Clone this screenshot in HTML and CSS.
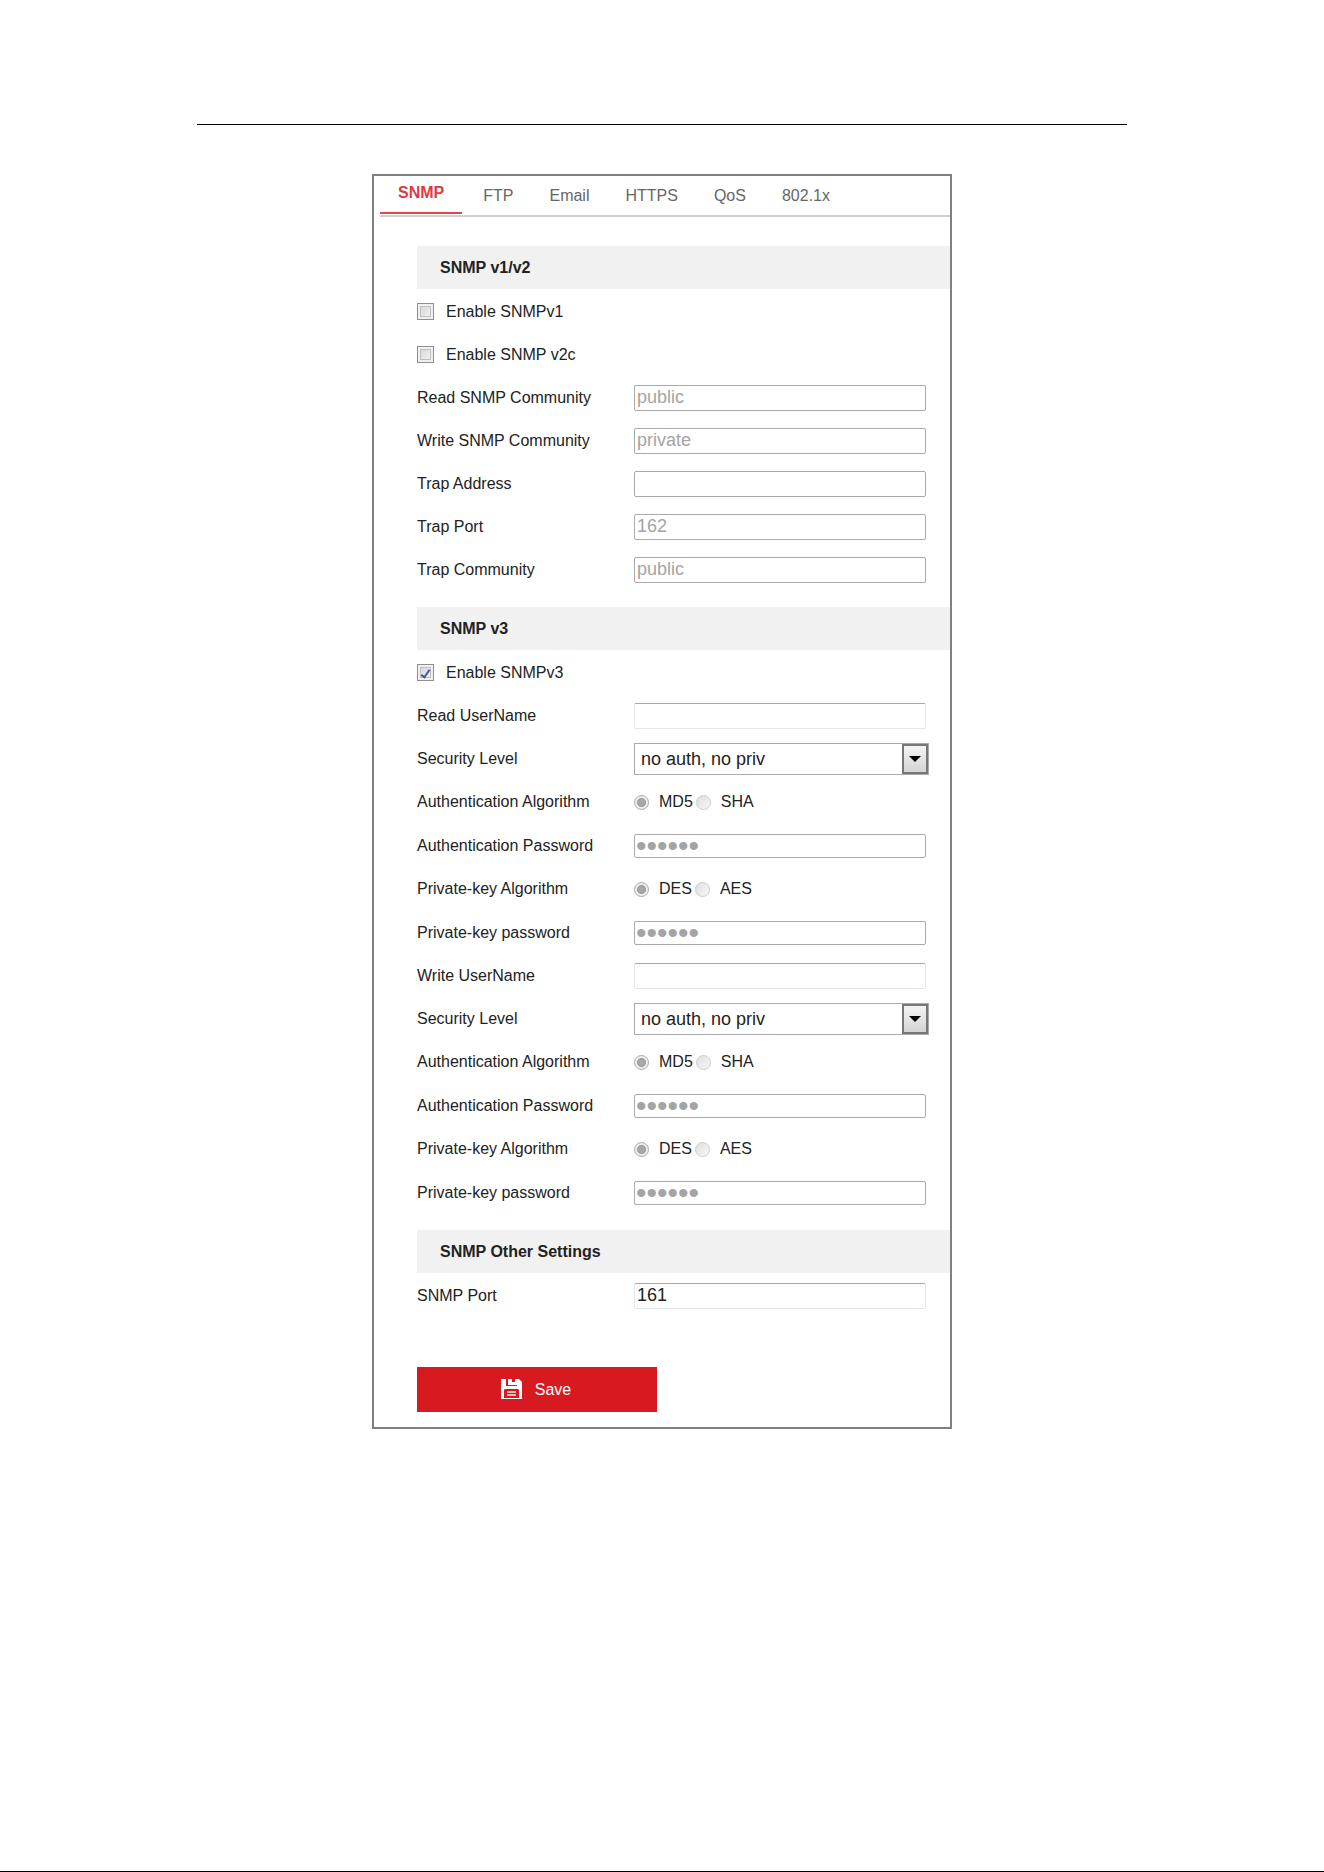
FILE: index.html
```html
<!DOCTYPE html>
<html lang="en">
<head>
    <meta charset="UTF-8">
    <meta name="viewport" content="width=device-width, initial-scale=1.0">
    <title>SNMP Settings</title>
    <link rel="stylesheet" href="styles.css">
</head>
<body>
    <hr class="page-rule">

    <div class="panel">
        <nav class="tabs">
            <a href="#snmp" class="active">SNMP</a>
            <a href="#ftp">FTP</a>
            <a href="#email">Email</a>
            <a href="#https">HTTPS</a>
            <a href="#qos">QoS</a>
            <a href="#8021x">802.1x</a>
        </nav>

        <form class="settings" id="snmp">
            <h2>SNMP v1/v2</h2>
            <div class="row">
                <input type="checkbox" id="enableV1">
                <label for="enableV1" class="check-label">Enable SNMPv1</label>
            </div>
            <div class="row">
                <input type="checkbox" id="enableV2">
                <label for="enableV2" class="check-label">Enable SNMP v2c</label>
            </div>
            <div class="row">
                <label for="readCommunity">Read SNMP Community</label>
                <input type="text" id="readCommunity" value="public" disabled>
            </div>
            <div class="row">
                <label for="writeCommunity">Write SNMP Community</label>
                <input type="text" id="writeCommunity" value="private" disabled>
            </div>
            <div class="row">
                <label for="trapAddress">Trap Address</label>
                <input type="text" id="trapAddress" disabled>
            </div>
            <div class="row">
                <label for="trapPort">Trap Port</label>
                <input type="text" id="trapPort" value="162" disabled>
            </div>
            <div class="row">
                <label for="trapCommunity">Trap Community</label>
                <input type="text" id="trapCommunity" value="public" disabled>
            </div>

            <h2>SNMP v3</h2>
            <div class="row">
                <input type="checkbox" id="enableV3" checked>
                <label for="enableV3" class="check-label">Enable SNMPv3</label>
            </div>

            <!-- Read user -->
            <div class="row">
                <label for="readUser">Read UserName</label>
                <input type="text" id="readUser">
            </div>
            <div class="row">
                <label for="readLevel">Security Level</label>
                <div class="select">
                    <select id="readLevel">
                        <option>no auth, no priv</option>
                        <option>auth, no priv</option>
                        <option>auth, priv</option>
                    </select>
                </div>
            </div>
            <div class="row radio-row" role="radiogroup" aria-labelledby="readAuthLabel">
                <span class="row-label" id="readAuthLabel">Authentication Algorithm</span>
                <input type="radio" name="readAuth" id="readMd5" checked disabled>
                <label for="readMd5">MD5</label>
                <input type="radio" name="readAuth" id="readSha" disabled>
                <label for="readSha">SHA</label>
            </div>
            <div class="row">
                <label for="readAuthPwd">Authentication Password</label>
                <input type="password" id="readAuthPwd" value="123456" disabled>
            </div>
            <div class="row radio-row" role="radiogroup" aria-labelledby="readKeyLabel">
                <span class="row-label" id="readKeyLabel">Private-key Algorithm</span>
                <input type="radio" name="readKey" id="readDes" checked disabled>
                <label for="readDes">DES</label>
                <input type="radio" name="readKey" id="readAes" disabled>
                <label for="readAes">AES</label>
            </div>
            <div class="row">
                <label for="readKeyPwd">Private-key password</label>
                <input type="password" id="readKeyPwd" value="123456" disabled>
            </div>

            <!-- Write user -->
            <div class="row">
                <label for="writeUser">Write UserName</label>
                <input type="text" id="writeUser">
            </div>
            <div class="row">
                <label for="writeLevel">Security Level</label>
                <div class="select">
                    <select id="writeLevel">
                        <option>no auth, no priv</option>
                        <option>auth, no priv</option>
                        <option>auth, priv</option>
                    </select>
                </div>
            </div>
            <div class="row radio-row" role="radiogroup" aria-labelledby="writeAuthLabel">
                <span class="row-label" id="writeAuthLabel">Authentication Algorithm</span>
                <input type="radio" name="writeAuth" id="writeMd5" checked disabled>
                <label for="writeMd5">MD5</label>
                <input type="radio" name="writeAuth" id="writeSha" disabled>
                <label for="writeSha">SHA</label>
            </div>
            <div class="row">
                <label for="writeAuthPwd">Authentication Password</label>
                <input type="password" id="writeAuthPwd" value="123456" disabled>
            </div>
            <div class="row radio-row" role="radiogroup" aria-labelledby="writeKeyLabel">
                <span class="row-label" id="writeKeyLabel">Private-key Algorithm</span>
                <input type="radio" name="writeKey" id="writeDes" checked disabled>
                <label for="writeDes">DES</label>
                <input type="radio" name="writeKey" id="writeAes" disabled>
                <label for="writeAes">AES</label>
            </div>
            <div class="row">
                <label for="writeKeyPwd">Private-key password</label>
                <input type="password" id="writeKeyPwd" value="123456" disabled>
            </div>

            <h2>SNMP Other Settings</h2>
            <div class="row">
                <label for="snmpPort">SNMP Port</label>
                <input type="text" id="snmpPort" value="161">
            </div>

            <button type="button" class="save">
                <svg width="21" height="21" viewBox="0 0 21 21" aria-hidden="true">
                    <path fill="#fff" fill-rule="evenodd" d="M0 0h5v7h11V0h2l3 3v17H0zM3 11v8h15v-8l-1-1H4z"/>
                    <path fill="#fff" d="M7 0h4v3h3V0h2v6H7z"/>
                    <path fill="#f3b5b7" d="M6 12h9v2H6zM6 15h9v2H6z"/>
                </svg>
                Save
            </button>
        </form>
    </div>
</body>
</html>
```

FILE: styles.css
```css
*,
*::before,
*::after {
    box-sizing: border-box;
}
body {
    font-family: "Liberation Sans", Arial, sans-serif;
    font-size: 16px;
    color: #222;
    margin: 0;
    padding: 124px 20px 40px;
    min-height: 100vh;
    background-color: white;
    border-bottom: 1px solid #000;
}
.page-rule {
    max-width: 930px;
    height: 1px;
    margin: 0 auto 49px;
    border: none;
    background-color: #000;
}
.panel {
    max-width: 580px;
    margin: 0 auto;
    border: 2px solid #808080;
}

/* Tabs */
.tabs {
    display: flex;
    align-items: flex-start;
    margin-left: 6px;
    height: 41px;
    border-bottom: 2px solid #d0d0d0;
}
.tabs a {
    padding: 0 18px;
    line-height: 39px;
    color: #666;
    text-decoration: none;
}
.tabs a.active {
    margin-right: 3px;
    padding-bottom: 2px;
    line-height: 34px;
    font-weight: bold;
    color: #e03a45;
    border-bottom: 2px solid #e04550;
}

/* Form */
.settings {
    padding: 13px 0 15px 43px;
}
h2 {
    margin: 16px 0 1px;
    padding-left: 23px;
    font-size: 16px;
    line-height: 43px;
    background-color: #f1f1f1;
}
.row {
    display: flex;
    align-items: center;
    height: 43px;
}
.row > label,
.row-label {
    width: 217px;
}
.row > .check-label {
    width: auto;
    margin-left: 12px;
}
input {
    margin: 0;
    font-family: inherit;
}
input[type="text"],
input[type="password"] {
    width: 292px;
    height: 26px;
    padding: 0 2px;
    font-size: 18px;
    color: #222;
    background-color: white;
    border: 1px solid #e0e6ec;
    border-top-color: #a8a8ac;
    border-radius: 2px;
}
input[type="text"]:disabled,
input[type="password"]:disabled {
    color: #a4a4a4;
    border: 1px solid #aaa;
}
input[type="password"]:disabled {
    height: 24px;
    padding: 0 1px;
    font-size: 30px;
}
input[type="checkbox"] {
    appearance: none;
    display: grid;
    place-items: center;
    width: 17px;
    height: 17px;
    border: 1px solid #8e8f8f;
    background: linear-gradient(135deg, #d0d0d0, #f8f8f8);
    box-shadow: inset 0 0 0 2px #f0f0f0, inset 0 0 0 3px #c0c0c0;
}
input[type="checkbox"]:checked::before {
    content: "";
    width: 5px;
    height: 10px;
    border: solid #4055a5;
    border-width: 0 2px 2px 0;
    transform: rotate(35deg);
}

/* Select */
.select {
    position: relative;
    width: 295px;
}
.select select {
    appearance: none;
    display: block;
    width: 100%;
    height: 32px;
    padding: 0 30px 0 6px;
    font-family: inherit;
    font-size: 18px;
    color: #222;
    background-color: white;
    border: 1px solid #a9a9af;
    border-radius: 0;
}
.select::before {
    content: "";
    position: absolute;
    top: 1px;
    right: 1px;
    width: 26px;
    height: 30px;
    border: 2px solid #777;
    background: linear-gradient(#f4f4f4, #d4d4d4);
    pointer-events: none;
}
.select::after {
    content: "";
    position: absolute;
    top: 13px;
    right: 8px;
    border: 6px solid transparent;
    border-top-color: #000;
    border-bottom: none;
    pointer-events: none;
}

/* Radio buttons */
.radio-row {
    height: 44px;
}
.row > input[type="radio"] + label {
    width: auto;
    margin: 0 3px 0 10px;
}
input[type="radio"] {
    appearance: none;
    width: 15px;
    height: 15px;
    border: 1px solid #ccc;
    border-radius: 50%;
    background: linear-gradient(135deg, #dedede, #f8f8f8);
}
input[type="radio"]:checked {
    border-color: #aaa;
    background: radial-gradient(circle, #a8a8a8 3px, #999 4px, #eee 5px, #eee 6px);
}

.save {
    display: flex;
    align-items: center;
    justify-content: center;
    gap: 13px;
    width: 240px;
    height: 45px;
    margin-top: 50px;
    padding: 0 2px 0 0;
    font-family: inherit;
    font-size: 16px;
    color: white;
    background-color: #d71920;
    border: none;
    cursor: pointer;
}
```
